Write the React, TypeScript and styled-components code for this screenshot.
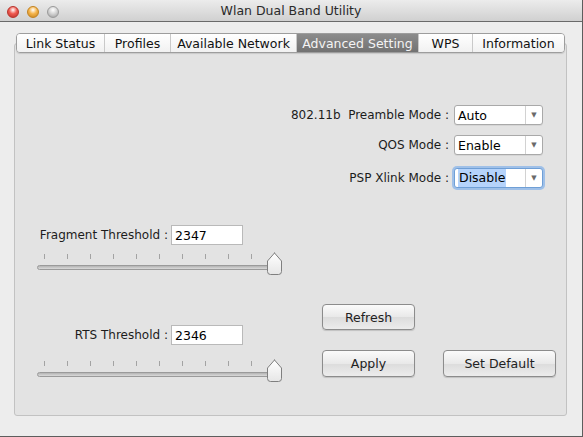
import React from 'react';
import styled, { createGlobalStyle } from 'styled-components';

const GlobalStyle = createGlobalStyle`
  html, body {
    margin: 0;
    padding: 0;
    background: #ececec;
  }
  body {
    font-family: "DejaVu Sans", "Lucida Grande", sans-serif;
    font-size: 12px;
    color: #1c1c1c;
  }
`;

const Window = styled.div`
  width: 583px;
  height: 437px;
  box-sizing: border-box;
  background: #ededed;
  border-right: 1px solid #5d5d5d;
  border-bottom: 1px solid #5d5d5d;
  display: flex;
  flex-direction: column;
`;

const TitleBar = styled.div`
  height: 21px;
  flex: none;
  position: relative;
  display: flex;
  align-items: center;
  justify-content: center;
  background: linear-gradient(#ececec, #d0d0d0);
  border-bottom: 1px solid #6a6a6a;
  font-size: 12.5px;
  color: #2a2a2a;
`;

const Lights = styled.div`
  position: absolute;
  left: 7px;
  top: 6px;
  display: flex;
  gap: 8px;
`;

const Light = styled.span<{ $c: string; $d: string }>`
  width: 12px;
  height: 12px;
  border-radius: 50%;
  box-sizing: border-box;
  border: 1px solid ${(p) => p.$d};
  background: radial-gradient(circle at 50% 30%, #fff 0, ${(p) => p.$c} 45%, ${(p) => p.$d} 100%);
`;

const Body = styled.div`
  flex: 1;
  display: flex;
  flex-direction: column;
  align-items: stretch;
  padding: 11px 15px 20px 14px;
`;

const TabBar = styled.div`
  align-self: center;
  display: flex;
  height: 20px;
  box-sizing: border-box;
  border: 1px solid #9d9d9d;
  border-radius: 4px;
  overflow: hidden;
  position: relative;
  z-index: 1;
  box-shadow: 0 1px 1px rgba(0, 0, 0, 0.12);
`;

const Tab = styled.div<{ $w: number; $active?: boolean }>`
  width: ${(p) => p.$w}px;
  box-sizing: border-box;
  display: flex;
  align-items: center;
  justify-content: center;
  font-size: 12.5px;
  white-space: nowrap;
  color: ${(p) => (p.$active ? '#f4f4f4' : '#111')};
  background: ${(p) =>
    p.$active ? 'linear-gradient(#8c8c8c, #727272)' : 'linear-gradient(#ffffff, #f1f1f1)'};
  & + & {
    border-left: 1px solid ${(p) => (p.$active ? '#6d6d6d' : '#c9c9c9')};
  }
`;

const Panel = styled.div`
  flex: 1;
  margin-top: -10px;
  background: #e3e3e3;
  border: 1px solid #c2c2c2;
  border-radius: 3px;
  padding: 61px 10px 0 22px;
  display: flex;
  flex-direction: column;
`;

const ModeList = styled.div`
  display: flex;
  flex-direction: column;
  align-items: flex-end;
  gap: 10px;
  margin-right: 13px;
`;

const ModeRow = styled.div<{ $extra?: number }>`
  display: flex;
  align-items: center;
  gap: 5px;
  margin-top: ${(p) => p.$extra || 0}px;
`;

const Label = styled.span`
  white-space: pre;
  font-size: 12px;
`;

const Select = styled.div<{ $focus?: boolean }>`
  width: 89px;
  height: 20px;
  box-sizing: border-box;
  display: flex;
  background: #fff;
  border: 1px solid ${(p) => (p.$focus ? '#6f9fd6' : '#a9a9a9')};
  border-radius: 3px;
  box-shadow: ${(p) => (p.$focus ? '0 0 0 2px #9fc0e8' : '0 1px 0 rgba(0,0,0,0.06)')};
`;

const SelectText = styled.div`
  flex: 1;
  display: flex;
  align-items: center;
  padding-left: 3px;
  font-size: 12.5px;
  color: #000;
`;

const Highlight = styled.span`
  background: #b5d3fb;
  padding: 1px 1px 2px 1px;
`;

const SelectArrow = styled.div`
  width: 16px;
  border-left: 1px solid #d2d2d2;
  display: flex;
  align-items: center;
  justify-content: center;
  font-size: 7px;
  color: #6a6a6a;
`;

const Lower = styled.div`
  display: flex;
  margin-top: 37px;
  gap: 36px;
`;

const SliderColumn = styled.div`
  width: 250px;
  display: flex;
  flex-direction: column;
`;

const FieldRow = styled.div<{ $top?: number }>`
  display: flex;
  align-items: center;
  margin-top: ${(p) => p.$top || 0}px;
`;

const FieldLabel = styled.span`
  width: 130px;
  margin-left: 1px;
  text-align: right;
  font-size: 12px;
  white-space: pre;
`;

const NumInput = styled.div`
  margin-left: 3px;
  width: 72px;
  height: 20px;
  box-sizing: border-box;
  background: #fff;
  border: 1px solid #b9b9b9;
  display: flex;
  align-items: center;
  padding-left: 3px;
  font-size: 12.5px;
  color: #000;
`;

const Slider = styled.div<{ $top: number }>`
  position: relative;
  width: 245px;
  height: 23px;
  margin-top: ${(p) => p.$top}px;
`;

const Ticks = styled.div`
  display: flex;
  justify-content: space-between;
  align-items: flex-end;
  padding: 0 7px;
  margin-top: 1px;
  height: 5px;
`;

const Tick = styled.span<{ $tall?: boolean }>`
  width: 1px;
  height: ${(p) => (p.$tall ? 7 : 5)}px;
  background: #a3a3a3;
`;

const Track = styled.div`
  margin-top: 6px;
  margin-right: 2px;
  height: 5px;
  box-sizing: border-box;
  border: 1px solid #9a9a9a;
  border-radius: 3px;
  background: linear-gradient(#b3b3b3, #dadada);
`;

const Thumb = styled.svg`
  position: absolute;
  top: -1px;
`;

const ButtonGrid = styled.div`
  display: grid;
  grid-template-columns: 93px 113px;
  grid-template-rows: 26px 27px;
  column-gap: 28px;
  row-gap: 20px;
  padding-top: 79px;
`;

const Button = styled.div<{ $col?: number }>`
  grid-column: ${(p) => p.$col || 'auto'};
  box-sizing: border-box;
  display: flex;
  align-items: center;
  justify-content: center;
  border: 1px solid #8c8c8c;
  border-radius: 4px;
  background: linear-gradient(#fbfbfb, #e9e9e9 50%, #dcdcdc 51%, #ececec);
  box-shadow: 0 1px 1px rgba(0, 0, 0, 0.15);
  font-size: 12.5px;
  color: #222;
`;

const tabs: [string, number][] = [
  ['Link Status', 87],
  ['Profiles', 66],
  ['Available Network', 126],
  ['Advanced Setting', 122],
  ['WPS', 54],
  ['Information', 92],
];

// thumb left offset within the 245px slider, from the slider's value (max = far right tick)
const thumbLeft = (value: number, max: number) => 229 * (value / max);

const ThresholdSlider = ({ top, value, max }: { top: number; value: number; max: number }) => (
  <Slider $top={top}>
    <Ticks>
      {Array.from({ length: 11 }).map((_, i) => (
        <Tick key={i} $tall={i === 10} />
      ))}
    </Ticks>
    <Track />
    <Thumb width="17" height="24" viewBox="0 0 17 24" style={{ left: thumbLeft(value, max) }}>
      <defs>
        <linearGradient id="tg" x1="0" y1="0" x2="0" y2="1">
          <stop offset="0" stopColor="#ffffff" />
          <stop offset="1" stopColor="#e6e6e6" />
        </linearGradient>
      </defs>
      <path
        d="M8.5 1 L15.5 9 L15.5 19.5 Q15.5 22.5 12.5 22.5 L4.5 22.5 Q1.5 22.5 1.5 19.5 L1.5 9 Z"
        fill="url(#tg)"
        stroke="#7f7f7f"
        strokeWidth="1"
      />
    </Thumb>
  </Slider>
);

const App = () => {
  return (
    <Window>
      <GlobalStyle />
      <TitleBar>
        <Lights>
          <Light $c="#f0594f" $d="#b8322b" />
          <Light $c="#f5b44a" $d="#c3821e" />
          <Light $c="#d4d4d4" $d="#9a9a9a" />
        </Lights>
        Wlan Dual Band Utility
      </TitleBar>
      <Body>
        <TabBar>
          {tabs.map(([name, w]) => (
            <Tab key={name} $w={w} $active={name === 'Advanced Setting'}>
              {name}
            </Tab>
          ))}
        </TabBar>
        <Panel>
          <ModeList>
            <ModeRow>
              <Label>802.11b  Preamble Mode :</Label>
              <Select>
                <SelectText>Auto</SelectText>
                <SelectArrow>▼</SelectArrow>
              </Select>
            </ModeRow>
            <ModeRow>
              <Label>QOS Mode :</Label>
              <Select>
                <SelectText>Enable</SelectText>
                <SelectArrow>▼</SelectArrow>
              </Select>
            </ModeRow>
            <ModeRow $extra={3}>
              <Label>PSP Xlink Mode :</Label>
              <Select $focus>
                <SelectText>
                  <Highlight>Disable</Highlight>
                </SelectText>
                <SelectArrow>▼</SelectArrow>
              </Select>
            </ModeRow>
          </ModeList>
          <Lower>
            <SliderColumn>
              <FieldRow>
                <FieldLabel>Fragment Threshold :</FieldLabel>
                <NumInput>2347</NumInput>
              </FieldRow>
              <ThresholdSlider top={8} value={2347} max={2347} />
              <FieldRow $top={49}>
                <FieldLabel>RTS Threshold :</FieldLabel>
                <NumInput>2346</NumInput>
              </FieldRow>
              <ThresholdSlider top={15} value={2346} max={2347} />
            </SliderColumn>
            <ButtonGrid>
              <Button>Refresh</Button>
              <Button $col={1}>Apply</Button>
              <Button>Set Default</Button>
            </ButtonGrid>
          </Lower>
        </Panel>
      </Body>
    </Window>
  );
};

export default App;
